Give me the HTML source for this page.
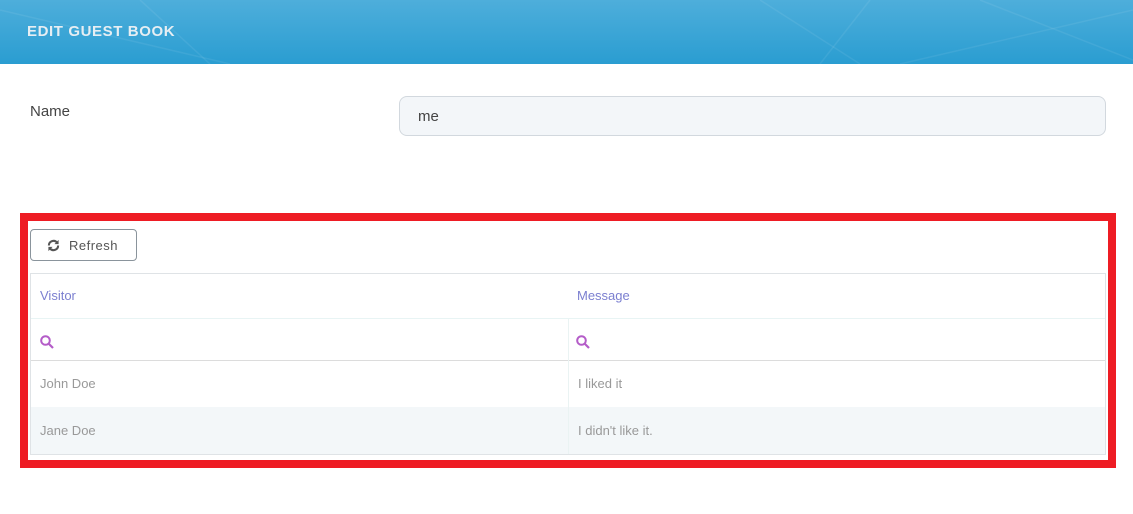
<!DOCTYPE html>
<html><head><style>
body{margin:0;width:1133px;height:514px;background:#fff;font-family:"Liberation Sans",sans-serif;position:relative;overflow:hidden}
.hdr{position:absolute;left:0;top:0;width:1133px;height:64px;background:linear-gradient(180deg,#4eaedb 0%,#2a9dd1 100%);overflow:hidden}
.hdr .t{position:absolute;left:27px;top:23px;color:#e6eef3;font-weight:bold;font-size:15px;letter-spacing:0.6px}
.lbl{position:absolute;left:30px;top:103px;font-size:15px;color:#444}
.inp{position:absolute;left:399px;top:96px;width:705px;height:38px;border:1px solid #d2d8de;border-radius:8px;background:#f3f6f9}
.inp span{position:absolute;left:18px;top:11px;font-size:15px;color:#444}
.red{position:absolute;left:20px;top:213px;width:1080px;height:239px;border:8px solid #ee1c24}
.btn{position:absolute;left:30px;top:229px;width:107px;height:32px;border:1px solid #8a949c;border-radius:4px;box-sizing:border-box}
.btn span{position:absolute;left:38px;top:8px;font-size:13px;color:#555;letter-spacing:0.5px}
.tbl{position:absolute;left:30px;top:273px;width:1074px;height:180px;border:1px solid #dfe3e6}
.c{position:absolute;font-size:13px}
</style></head><body>
<div class="hdr">
<svg width="1133" height="64" style="position:absolute;left:0;top:0"><g stroke="#ffffff" stroke-opacity="0.07" stroke-width="1.5" fill="none"><path d="M0 10 L230 64"/><path d="M140 0 L210 64"/><path d="M820 64 L870 0"/><path d="M900 64 L1133 10"/><path d="M980 0 L1133 60"/><path d="M760 0 L860 64"/></g></svg>
<div class="t">EDIT GUEST BOOK</div></div>
<div class="lbl">Name</div>
<div class="inp"><span>me</span></div>
<div class="red"></div>
<div class="btn"><svg style="position:absolute;left:16px;top:9px" width="13" height="13" viewBox="0 0 14 14"><path d="M2 7a5 5 0 0 1 9-3" stroke="#555" stroke-width="2.2" fill="none"/><path d="M12 7a5 5 0 0 1-9 3" stroke="#555" stroke-width="2.2" fill="none"/><path d="M12.5 1v4.5h-4.5z" fill="#555"/><path d="M1.5 13v-4.5h4.5z" fill="#555"/></svg><span>Refresh</span></div>
<div class="tbl">
<div style="position:absolute;left:0;top:44px;width:1074px;height:1px;background:#e8f4f4"></div>
<div style="position:absolute;left:0;top:86px;width:1074px;height:1px;background:#dcdcdc"></div>
<div style="position:absolute;left:0;top:133px;width:1074px;height:47px;background:#f3f7f9"></div>
<div style="position:absolute;left:537px;top:45px;width:1px;height:135px;background:#eaf3f3"></div>
<div class="c" style="left:9px;top:14px;color:#7b7fd0">Visitor</div>
<div class="c" style="left:546px;top:14px;color:#7b7fd0">Message</div>
<svg style="position:absolute;left:9px;top:61px" width="14" height="14" viewBox="0 0 14 14"><circle cx="5.5" cy="5.5" r="4.3" stroke="#b45cc8" stroke-width="2" fill="none"/><path d="M8.5 8.5L13 13" stroke="#b45cc8" stroke-width="2.2"/></svg>
<svg style="position:absolute;left:545px;top:61px" width="14" height="14" viewBox="0 0 14 14"><circle cx="5.5" cy="5.5" r="4.3" stroke="#b45cc8" stroke-width="2" fill="none"/><path d="M8.5 8.5L13 13" stroke="#b45cc8" stroke-width="2.2"/></svg>
<div class="c" style="left:9px;top:102px;color:#999">John Doe</div>
<div class="c" style="left:547px;top:102px;color:#999">I liked it</div>
<div class="c" style="left:9px;top:149px;color:#999">Jane Doe</div>
<div class="c" style="left:547px;top:149px;color:#999">I didn't like it.</div>
</div>
</body></html>
